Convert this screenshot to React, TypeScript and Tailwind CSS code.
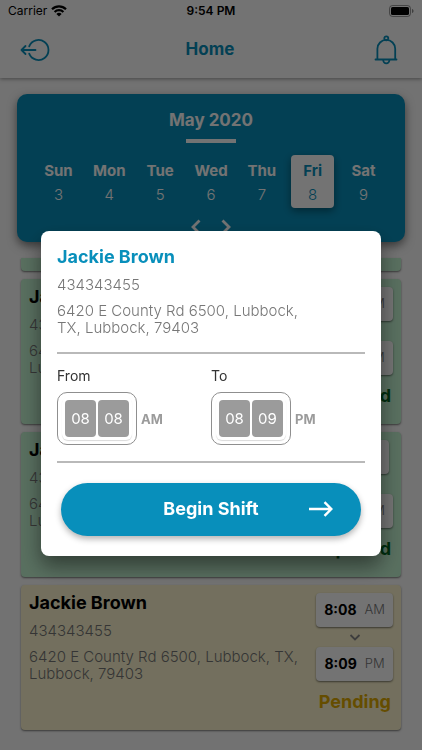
import { useState } from 'react';
import clsx from 'clsx';

type Time = { value: string; period: 'AM' | 'PM' };

type Shift = {
  id: number;
  name: string;
  phone: string;
  address: string;
  start: Time;
  end: Time;
  status: 'Completed' | 'Pending';
};

const days = [
  { label: 'Sun', date: 3 },
  { label: 'Mon', date: 4 },
  { label: 'Tue', date: 5 },
  { label: 'Wed', date: 6 },
  { label: 'Thu', date: 7 },
  { label: 'Fri', date: 8 },
  { label: 'Sat', date: 9 },
];

const client = {
  name: 'Jackie Brown',
  phone: '434343455',
  address: '6420 E County Rd 6500, Lubbock, TX, Lubbock, 79403',
};

const shifts: Shift[] = [
  {
    id: 1,
    ...client,
    start: { value: '8:00', period: 'AM' },
    end: { value: '8:06', period: 'AM' },
    status: 'Completed',
  },
  {
    id: 2,
    ...client,
    start: { value: '7:11', period: 'AM' },
    end: { value: '8:08', period: 'AM' },
    status: 'Completed',
  },
  {
    id: 3,
    ...client,
    start: { value: '8:08', period: 'AM' },
    end: { value: '8:09', period: 'PM' },
    status: 'Pending',
  },
];

function StatusBar() {
  return (
    <div className="relative flex h-[22px] items-center justify-between px-2 text-xs text-black">
      <div className="flex items-center gap-1">
        <span>Carrier</span>
        <svg width="16" height="12" viewBox="0 0 16 12" fill="none" stroke="currentColor" strokeWidth="2.2">
          <path d="M1 4.3a10 10 0 0 1 14 0" />
          <path d="M3.6 7a6.3 6.3 0 0 1 8.8 0" />
          <path d="M8 11.6 5.4 9a3.7 3.7 0 0 1 5.2 0z" fill="currentColor" stroke="none" />
        </svg>
      </div>
      <span className="absolute inset-x-0 text-center font-semibold">9:54 PM</span>
      <svg width="25" height="12" viewBox="0 0 25 12">
        <rect x="0.5" y="0.5" width="21" height="11" rx="3" fill="none" stroke="#000" strokeOpacity="0.4" />
        <rect x="2" y="2" width="18" height="8" rx="1.6" fill="#000" />
        <path d="M23 4v4c1-.3 1.5-1.1 1.5-2S24 4.3 23 4z" fill="#000" fillOpacity="0.45" />
      </svg>
    </div>
  );
}

function Header() {
  return (
    <header className="bg-white shadow-[0_1px_4px_rgba(0,0,0,0.4)]">
      <StatusBar />
      <div className="flex h-14 items-center justify-between px-5 text-[#088fbb]">
        <button type="button" aria-label="Log out">
          <svg width="30" height="24" viewBox="0 0 30 24" fill="none" stroke="currentColor" strokeWidth="1.8" strokeLinecap="round" strokeLinejoin="round">
            <path d="M9.2 8.3a10 10 0 1 1 0 7.4" />
            <path d="M15.5 12H1.5M5.5 8l-4 4 4 4" />
          </svg>
        </button>
        <h1 className="text-[17px] font-bold">Home</h1>
        <button type="button" aria-label="Notifications" className="px-1">
          <svg width="24" height="30" viewBox="0 0 24 30" fill="none" stroke="currentColor" strokeWidth="1.8" strokeLinecap="round" strokeLinejoin="round">
            <path d="M1.5 24.5h21M3.4 24.5V13.8a8.9 8.9 0 0 1 17.8 0v10.7" />
            <circle cx="12.3" cy="3.3" r="2" />
            <path d="M9.2 24.8a3.1 3.6 0 0 0 6.2 0" />
          </svg>
        </button>
      </div>
    </header>
  );
}

function Calendar() {
  const [selected, setSelected] = useState(8);

  return (
    <section className="mx-[17px] mt-4 flex flex-col items-center rounded-[10px] bg-[#088fbb] px-4 pt-4 pb-1 text-white shadow-[0_4px_10px_rgba(0,0,0,0.5)]">
      <h2 className="text-[17px] leading-5 font-bold">May 2020</h2>
      <div className="mt-[9px] h-1 w-[50px] bg-white" />
      <div className="mt-3 grid w-full grid-cols-7 justify-items-center">
        {days.map((day) => (
          <button
            key={day.date}
            type="button"
            onClick={() => setSelected(day.date)}
            className={clsx(
              'flex h-[53px] w-[43px] flex-col items-center rounded-sm pt-1 text-[15px] leading-6',
              selected === day.date && 'bg-white text-[#088fbb] shadow-[0_3px_8px_rgba(0,0,0,0.4)]'
            )}
          >
            <span className="font-bold">{day.label}</span>
            <span className="font-light">{day.date}</span>
          </button>
        ))}
      </div>
      <div className="mt-2 flex gap-[18px]">
        <button type="button" aria-label="Previous week">
          <svg width="12" height="22" viewBox="0 0 12 22" fill="none" stroke="currentColor" strokeWidth="2.8">
            <path d="M9.5 4.5 3 11l6.5 6.5" />
          </svg>
        </button>
        <button type="button" aria-label="Next week">
          <svg width="12" height="22" viewBox="0 0 12 22" fill="none" stroke="currentColor" strokeWidth="2.8">
            <path d="M2.5 4.5 9 11l-6.5 6.5" />
          </svg>
        </button>
      </div>
    </section>
  );
}

function TimeBox({ time }: { time: Time }) {
  return (
    <div className="flex h-[34px] items-center gap-2 rounded-sm bg-white px-2 shadow-[0_1px_2px_rgba(0,0,0,0.5)]">
      <span className="text-sm font-bold text-black">{time.value}</span>
      <span className="text-[13px] font-light text-[#777]">{time.period}</span>
    </div>
  );
}

function ShiftCard({ shift }: { shift: Shift }) {
  const pending = shift.status === 'Pending';

  return (
    <li
      className={clsx(
        'flex h-[145px] justify-between rounded-sm p-2 shadow-[0_1px_2px_rgba(0,0,0,0.5)]',
        pending ? 'bg-[#fff7d0]' : 'bg-[#c4f5d3]'
      )}
    >
      <div className="min-w-0 flex-1 text-[15px] leading-[17px] font-light text-[#777]">
        <h3 className="text-lg leading-5 font-bold text-black">{shift.name}</h3>
        <p className="mt-[9px]">{shift.phone}</p>
        <p className="mt-[9px]">{shift.address}</p>
      </div>
      {/* fixed width, a long status grows to the left under the address */}
      <div className="flex w-20 flex-col items-end">
        <div className="flex flex-col items-center">
          <TimeBox time={shift.start} />
          <svg className="my-1" width="12" height="12" viewBox="0 0 12 12" fill="none" stroke="#888" strokeWidth="1.8">
            <path d="M1.5 4 6 8.5 10.5 4" />
          </svg>
          <TimeBox time={shift.end} />
        </div>
        <span
          className={clsx(
            'mt-[11px] mr-0.5 text-lg leading-5 font-bold',
            pending ? 'text-[#dfab00]' : 'text-[#00651f]'
          )}
        >
          {shift.status}
        </span>
      </div>
    </li>
  );
}

function TimeField({ label, hour, minute, period }: { label: string; hour: string; minute: string; period: string }) {
  const tile = 'h-[37px] w-[31px] rounded-sm bg-[#9b9b9b] text-center text-[15px] text-white';

  return (
    <fieldset>
      <legend className="text-sm leading-5 text-[#333]">{label}</legend>
      <div className="mt-1.5 flex items-center gap-1">
        <div className="rounded-[10px] border border-[#8f8f8f] p-1">
          <div className="flex gap-0.5 rounded-md p-[3px] shadow-[0_1px_1px_rgba(0,0,0,0.15)]">
            <input className={tile} aria-label={`${label} hour`} defaultValue={hour} />
            <input className={tile} aria-label={`${label} minute`} defaultValue={minute} />
          </div>
        </div>
        <span className="pt-1 text-[13px] font-bold text-[#9b9b9b]">{period}</span>
      </div>
    </fieldset>
  );
}

function ShiftDialog() {
  return (
    <div className="fixed inset-0 flex items-center justify-center bg-black/55 px-[41px] pt-9">
      <div
        role="dialog"
        aria-modal="true"
        aria-labelledby="client-name"
        className="w-full rounded-lg bg-white px-4 pt-4 pb-5 shadow-[0_10px_20px_rgba(0,0,0,0.45)]"
      >
        <h2 id="client-name" className="text-lg leading-5 font-bold text-[#088fbb]">
          {client.name}
        </h2>
        <div className="max-w-[250px] text-[15px] leading-[17px] font-light text-[#777]">
          <p className="mt-[9px]">{client.phone}</p>
          <p className="mt-[9px]">{client.address}</p>
        </div>
        <hr className="mt-4 mb-3 border-t-2 border-[#b9b9b9]" />
        <div className="grid grid-cols-2">
          <TimeField label="From" hour="08" minute="08" period="AM" />
          <TimeField label="To" hour="08" minute="09" period="PM" />
        </div>
        <hr className="mt-4 mb-5 border-t-2 border-[#b9b9b9]" />
        <div className="px-1">
          <button
            type="button"
            className="relative flex h-[53px] w-full items-center justify-center rounded-full bg-[#088fbb] text-lg font-bold text-white shadow-[0_3px_6px_rgba(0,0,0,0.3)]"
          >
            Begin Shift
            <svg className="absolute right-7" width="24" height="16" viewBox="0 0 24 16" fill="none" stroke="currentColor" strokeWidth="2.4">
              <path d="M0 8h22M15.5 1.2 22.3 8l-6.8 6.8" />
            </svg>
          </button>
        </div>
      </div>
    </div>
  );
}

export default function App() {
  return (
    <div className="min-h-screen bg-[#fcfcfc] font-['Inter',sans-serif]">
      <Header />
      <main>
        <Calendar />
        <div className="mt-4 px-[21px] pb-5">
          {/* bottom edge of the card scrolled under the calendar */}
          <div className="mb-2 h-[13px] rounded-b-sm bg-[#c4f5d3] shadow-[0_1px_2px_rgba(0,0,0,0.5)]" />
          <ul className="flex flex-col gap-2">
            {shifts.map((shift) => (
              <ShiftCard key={shift.id} shift={shift} />
            ))}
          </ul>
        </div>
      </main>
      <ShiftDialog />
    </div>
  );
}
